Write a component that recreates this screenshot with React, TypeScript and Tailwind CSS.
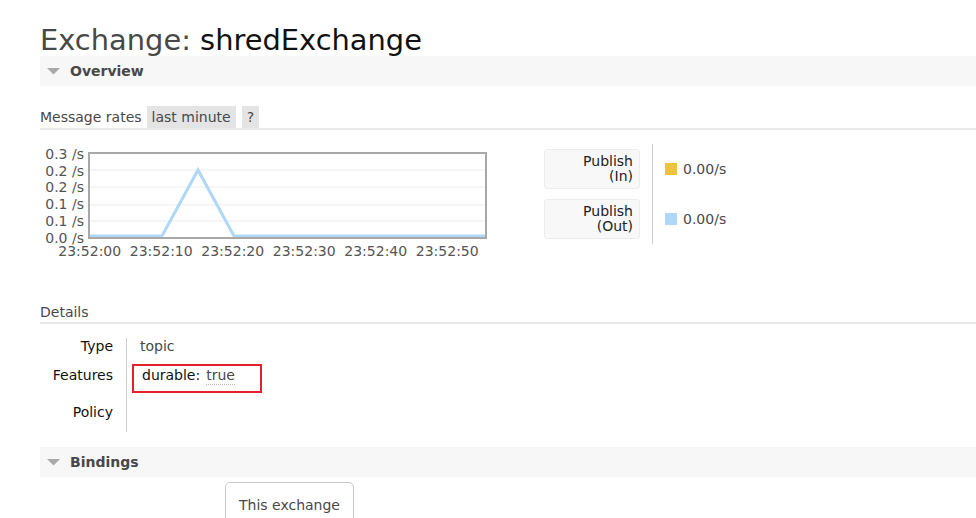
import { type ReactNode } from 'react'

const yLabels = ['0.3 /s', '0.2 /s', '0.2 /s', '0.1 /s', '0.1 /s', '0.0 /s']
const xLabels = ['23:52:00', '23:52:10', '23:52:20', '23:52:30', '23:52:40', '23:52:50']

function SectionHeader({ title }: { title: string }) {
  return (
    <div className="flex h-[30px] items-center bg-[#f7f7f7]">
      <svg width="13" height="7" viewBox="0 0 13 7" className="ml-[7px] mr-[10px]">
        <path d="M0 0 L13 0 L6.5 6.5 Z" fill="#a9a9a9" />
      </svg>
      <span className="text-[14px] font-bold text-[#484848]">{title}</span>
    </div>
  )
}

function RateChart() {
  // plot area is 395x83 inside a 2px frame; zero line sits near the bottom
  const pts = '0,82 72,82 108,16 144,82 395,82'
  return (
    <div className="pt-[2px]">
      <div className="flex items-start">
        <div className="flex w-[44px] flex-col items-end text-[14px] leading-[16.7px] text-[#545454]">
          {yLabels.map((l, i) => (
            <span key={i} className="whitespace-nowrap">
              {l}
            </span>
          ))}
        </div>
        <div className="ml-[4px] mt-[6px] h-[87px] w-[399px] border-2 border-[#a8a8a8]">
          <svg width="395" height="83" viewBox="0 0 395 83" className="block">
            {[16, 33, 51, 67].map((y) => (
              <line key={y} x1="0" x2="395" y1={y} y2={y} stroke="#ececec" strokeWidth="1" />
            ))}
            <polyline points={pts} fill="none" stroke="#afd8f8" strokeWidth="3" strokeLinejoin="miter" />
          </svg>
        </div>
      </div>
      <div className="-mt-[3px] ml-[14px] flex text-[14px] leading-[16px] text-[#545454]">
        {xLabels.map((l) => (
          <span key={l} className="w-[71.5px] shrink-0 text-center whitespace-nowrap">
            {l}
          </span>
        ))}
      </div>
    </div>
  )
}

function Legend() {
  const rows = [
    { top: 'Publish', bottom: '(In)', color: 'bg-[#edc240]' },
    { top: 'Publish', bottom: '(Out)', color: 'bg-[#afd8f8]' },
  ]
  return (
    <div className="ml-[57px] flex h-[100px]">
      <div className="flex flex-col gap-[10px] py-[5px]">
        {rows.map((r) => (
          <div
            key={r.bottom}
            className="flex h-[40px] w-[96px] flex-col items-end justify-center rounded-[3px] border border-[#ececec] bg-[#f8f8f8] pr-[6px] text-[14px] leading-[15px] text-[#222]"
          >
            <span>{r.top}</span>
            <span>{r.bottom}</span>
          </div>
        ))}
      </div>
      <div className="ml-[12px] w-px bg-[#cccccc]" />
      <div className="flex flex-col gap-[10px] py-[5px] pl-[12px]">
        {rows.map((r) => (
          <div key={r.bottom} className="flex h-[40px] items-center">
            <span className={`h-[12px] w-[12px] ${r.color}`} />
            <span className="ml-[6px] text-[14px] text-[#484848]">0.00/s</span>
          </div>
        ))}
      </div>
    </div>
  )
}

function Row({
  label,
  children,
  labelClass,
  valueClass,
}: {
  label: string
  children?: ReactNode
  labelClass: string
  valueClass: string
}) {
  return (
    <div className="flex">
      <div className={`w-[86px] shrink-0 pr-[13px] text-right text-[#111] ${labelClass}`}>{label}</div>
      <div className={`border-l border-[#cccccc] pl-[13px] text-[#484848] ${valueClass}`}>{children}</div>
    </div>
  )
}

export default function App() {
  return (
    <div className="h-screen overflow-hidden bg-white font-['DejaVu_Sans',Verdana,sans-serif] text-[14px] text-[#484848]">
      <div className="pl-[40px] pt-[24px]">
        <h1 className="text-[28.9px] leading-[33px] whitespace-nowrap text-[#484848]">
          Exchange: <span className="text-[#111]">shredExchange</span>
        </h1>

        <div className="-mt-[1px]">
          <SectionHeader title="Overview" />
        </div>

        <div className="mt-[20px] flex items-end border-b-2 border-[#e8e8e8]">
          <span className="mr-[5px] pb-[2px] leading-[17px]">Message rates</span>
          <span className="flex h-[22px] items-center bg-[#e4e4e4] px-[5px]">last minute</span>
          <span className="ml-[6px] flex h-[22px] items-center bg-[#e4e4e4] px-[5px]">?</span>
        </div>

        <div className="mt-[14px] flex items-start">
          <RateChart />
          <Legend />
        </div>

        <h3 className="mt-[43px] border-b-2 border-[#e8e8e8] text-[14px] leading-[20px] text-[#484848]">Details</h3>

        <div className="mt-[14px] leading-[17px]">
          <Row label="Type" labelClass="pb-[7px]" valueClass="pb-[7px]">
            topic
          </Row>
          <Row label="Features" labelClass="pt-[5px]" valueClass="pt-[2px]">
            <span className="-ml-[8px] inline-flex w-[130px] items-baseline border-2 border-[#e3202b] pb-[6px] pl-[8px] pt-[1px]">
              <span className="text-[#111]">durable:</span>
              <span className="ml-[6px] border-b border-dotted border-[#bbbbbb] text-[#484848]">true</span>
            </span>
          </Row>
          <Row label="Policy" labelClass="pb-[11px] pt-[11px]" valueClass="pb-[11px] pt-[11px]">
            {' '}
          </Row>
        </div>

        <div className="mt-[15px]">
          <SectionHeader title="Bindings" />
        </div>

        <div className="ml-[185px] mt-[5px] h-[44px] w-[129px] rounded-t-[5px] border border-[#c8c8c8] pt-[12px] text-center text-[#484848]">
          This exchange
        </div>
      </div>
    </div>
  )
}
